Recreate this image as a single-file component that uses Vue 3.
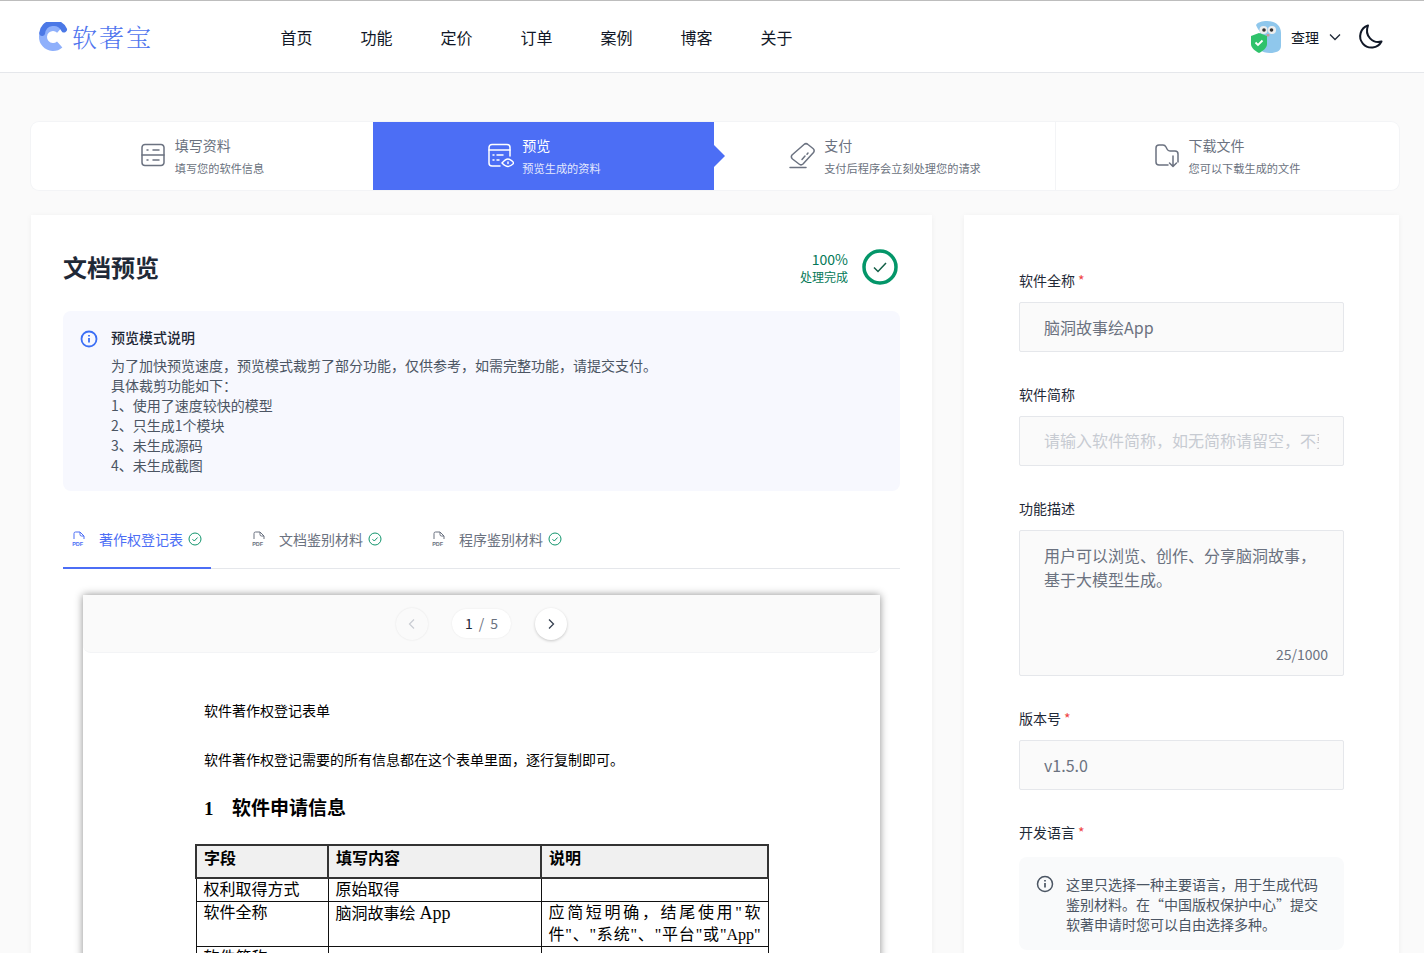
<template>
  <div class="page">
    <header class="topbar">
      <div class="brand">
        <svg class="brand-mark" viewBox="0 0 30 30" width="30" height="30">
          <circle cx="15" cy="15" r="10" fill="none" stroke="#8fb0fb" stroke-width="8" stroke-dasharray="46 17" transform="rotate(48 15 15)" />
          <path d="M26 7.500A11.500 11.500 0 0 0 4.200 11" fill="none" stroke="#4b78e6" stroke-width="6" stroke-linecap="round" />
        </svg>
        <span class="brand-name">软著宝</span>
      </div>
      <nav class="nav">
        <a v-for="item in navItems" :key="item" class="nav-item">{{ item }}</a>
      </nav>
      <div class="user">
        <svg class="avatar" viewBox="0 0 34 34" width="34" height="34">
          <path d="M6 5c2-3 6-4 11-4 8 0 14 4 14 12v13c0 5-5 7-11 7-4 0-8-1-10-3V12C9 10 7 8 6 5z" fill="#8fc7ec" />
          <circle cx="13.500" cy="10" r="4" fill="#eee" />
          <circle cx="22" cy="10" r="4" fill="#eee" />
          <circle cx="14" cy="10" r="1.800" fill="#333" />
          <circle cx="21.500" cy="10" r="1.800" fill="#333" />
          <rect x="16.500" y="14" width="3" height="2.500" rx="1" fill="#c99" />
          <path d="M9 13l8 3v8c0 4-4 7-8 9-4-2-8-5-8-9v-8z" fill="#2fc26b" />
          <path d="M5.500 22.500l2.500 2.500 4.500-4.500" fill="none" stroke="#fff" stroke-width="1.800" />
        </svg>
        <span class="user-name">查理</span>
        <svg class="chevron" viewBox="0 0 12 12" width="12" height="12">
          <path d="M1 3.500l5 5 5-5" fill="none" stroke="#1f2937" stroke-width="1.300" />
        </svg>
        <svg class="moon" viewBox="0 0 26 26" width="26" height="26">
          <path d="M11 1.500A11.300 11.300 0 1 0 24.500 17.500C16 20 7 12 11 1.500z" fill="none" stroke="#111827" stroke-width="2" stroke-linejoin="round" />
        </svg>
      </div>
    </header>

    <section class="steps">
      <div v-for="step in steps" :key="step.title" class="step" :class="{ active: step.active }">
        <svg class="step-icon" viewBox="0 0 28 28" width="28" height="28" fill="none" stroke="currentColor" stroke-width="1.500">
          <path v-for="d in step.icon" :key="d" :d="d" stroke-linecap="round" stroke-linejoin="round" />
        </svg>
        <div class="step-text">
          <div class="step-title">{{ step.title }}</div>
          <div class="step-desc">{{ step.desc }}</div>
        </div>
      </div>
    </section>

    <main class="content">
      <section class="card preview-card">
        <div class="preview-head">
          <h1 class="preview-title">文档预览</h1>
          <div class="progress">
            <div class="progress-text">
              <div class="progress-num">100%</div>
              <div class="progress-label">处理完成</div>
            </div>
            <svg viewBox="0 0 36 36" width="36" height="36">
              <circle cx="18" cy="18" r="16" fill="none" stroke="#049669" stroke-width="3.500" />
              <path d="M12 18.500l4 4 8-8.500" fill="none" stroke="#115e46" stroke-width="1.500" />
            </svg>
          </div>
        </div>

        <div class="notice">
          <svg class="notice-icon" viewBox="0 0 18 18" width="18" height="18">
            <circle cx="9" cy="9" r="7.500" fill="none" stroke="#3b6ff5" stroke-width="1.800" />
            <path d="M9 8v4.500M9 5v1.600" stroke="#3b6ff5" stroke-width="1.800" />
          </svg>
          <div>
            <div class="notice-title">预览模式说明</div>
            <div class="notice-body">
              <p v-for="line in noticeLines" :key="line">{{ line }}</p>
            </div>
          </div>
        </div>

        <div class="tabs">
          <div v-for="(tab, i) in tabs" :key="tab" class="tab" :class="{ current: i === 0 }">
            <svg class="pdf-icon" viewBox="0 0 14 16" width="14" height="16" fill="none" stroke="currentColor" stroke-width="1">
              <path d="M2 8V2.500Q2 1 3.500 1H8l4 4v3M8 1v2.500Q8 5 9.500 5H12" />
              <text x="0.200" y="14.500" class="pdf-label">PDF</text>
            </svg>
            <span class="tab-name">{{ tab }}</span>
            <svg viewBox="0 0 14 14" width="14" height="14" fill="none" stroke="#10946b" stroke-width="1">
              <circle cx="7" cy="7" r="6" />
              <path d="M4.500 7.200l1.800 1.800 3.300-3.500" />
            </svg>
          </div>
        </div>

        <div class="doc">
          <div class="doc-toolbar">
            <button class="page-btn disabled">
              <svg viewBox="0 0 12 12" width="12" height="12"><path d="M8 1.500L3.500 6 8 10.500" fill="none" stroke="#c9ccd2" stroke-width="1.200" /></svg>
            </button>
            <div class="page-count"><b>1</b><span>/</span><span>5</span></div>
            <button class="page-btn">
              <svg viewBox="0 0 12 12" width="12" height="12"><path d="M4 1.500L8.500 6 4 10.500" fill="none" stroke="#374151" stroke-width="1.300" /></svg>
            </button>
          </div>
          <div class="doc-body">
            <p class="doc-line first">软件著作权登记表单</p>
            <p class="doc-line">软件著作权登记需要的所有信息都在这个表单里面，逐行复制即可。</p>
            <h2 class="doc-heading"><span class="doc-num">1</span>软件申请信息</h2>
            <table class="doc-table">
              <colgroup>
                <col class="col-a" />
                <col class="col-b" />
                <col class="col-c" />
              </colgroup>
              <tbody>
                <tr class="head-row">
                  <th>字段</th>
                  <th>填写内容</th>
                  <th>说明</th>
                </tr>
                <tr class="row-short">
                  <td>权利取得方式</td>
                  <td>原始取得</td>
                  <td></td>
                </tr>
                <tr class="row-tall">
                  <td>软件全称</td>
                  <td>脑洞故事绘 <span class="latin">App</span></td>
                  <td class="explain">应简短明确，结尾使用"软件"、"系统"、"平台"或"App"</td>
                </tr>
                <tr class="row-tall">
                  <td>软件简称</td>
                  <td></td>
                  <td></td>
                </tr>
              </tbody>
            </table>
          </div>
        </div>
      </section>

      <aside class="card form-card">
        <div class="field">
          <label class="field-label">软件全称<i>*</i></label>
          <div class="input">脑洞故事绘App</div>
        </div>
        <div class="field">
          <label class="field-label">软件简称</label>
          <div class="input placeholder"><span>请输入软件简称，如无简称请留空，不要填写全称</span></div>
        </div>
        <div class="field">
          <label class="field-label">功能描述</label>
          <div class="textarea">
            <div>用户可以浏览、创作、分享脑洞故事，<br />基于大模型生成。</div>
            <div class="counter">25/1000</div>
          </div>
        </div>
        <div class="field">
          <label class="field-label">版本号<i>*</i></label>
          <div class="input">v1.5.0</div>
        </div>
        <div class="field">
          <label class="field-label">开发语言<i>*</i></label>
          <div class="hint">
            <svg class="hint-icon" viewBox="0 0 18 18" width="18" height="18">
              <circle cx="9" cy="9" r="7.500" fill="none" stroke="#4b5563" stroke-width="1.500" />
              <path d="M9 8v4.500M9 5v1.600" stroke="#4b5563" stroke-width="1.700" />
            </svg>
            <p>这里只选择一种主要语言，用于生成代码鉴别材料。在“中国版权保护中心”提交软著申请时您可以自由选择多种。</p>
          </div>
        </div>
      </aside>
    </main>
  </div>
</template>

<script setup>
const navItems = ['首页', '功能', '定价', '订单', '案例', '博客', '关于'];

const steps = [
  {
    title: '填写资料',
    desc: '填写您的软件信息',
    icon: [
      'M6 3.500h16a3 3 0 0 1 3 3v15a3 3 0 0 1-3 3H6a3 3 0 0 1-3-3v-15a3 3 0 0 1 3-3z',
      'M3 14h22',
      'M14 9h6M14 19h6',
      'M8 9h1M8 19h1',
    ],
  },
  {
    title: '预览',
    desc: '预览生成的资料',
    active: true,
    icon: [
      'M14 25H6a3 3 0 0 1-3-3V6.500a3 3 0 0 1 3-3h15a3 3 0 0 1 3 3V15',
      'M3 9h21',
      'M7 14h1M11 14h6M7 19h1M11 19h2',
      'M16 22q3.500-4 6-4t6 4q-3.500 3.500-6 3.500T16 22z',
      'M22 21v1.500',
    ],
  },
  {
    title: '支付',
    desc: '支付后程序会立刻处理您的请求',
    icon: [
      'M16 3.500a3 3 0 0 1 4 0l5 4a3 3 0 0 1 .5 4L15 23a3 3 0 0 1-4 0l-6.500-5a3 3 0 0 1-.5-4z',
      'M17 15l-3 3.500M20 12l-1 1.200',
      'M2 26.500h16',
    ],
  },
  {
    title: '下载文件',
    desc: '您可以下载生成的文件',
    icon: [
      'M15 24H6a3 3 0 0 1-3-3V7a3 3 0 0 1 3-3h4q2 0 3 2l1 2q1 2 3 2h5a3 3 0 0 1 3 3v8',
      'M20 15v10M16.500 22l3.500 3.500 3.500-3.500',
    ],
  },
];

const noticeLines = [
  '为了加快预览速度，预览模式裁剪了部分功能，仅供参考，如需完整功能，请提交支付。',
  '具体裁剪功能如下：',
  '1、使用了速度较快的模型',
  '2、只生成1个模块',
  '3、未生成源码',
  '4、未生成截图',
];

const tabs = ['著作权登记表', '文档鉴别材料', '程序鉴别材料'];
</script>

<style>
html,
body {
  margin: 0;
  background: #fafafa;
}
</style>

<style scoped>
.page {
  height: 953px;
  overflow: hidden;
  box-sizing: border-box;
  background: #fafafa;
  border-top: 1px solid #bdbdbd;
  font-family: 'Noto Sans CJK SC', 'Noto Sans', sans-serif;
  color: #111827;
}

.topbar {
  height: 72px;
  box-sizing: border-box;
  background: #fff;
  border-bottom: 1px solid #e5e7eb;
  display: flex;
  align-items: center;
  padding: 0 38px;
}

.brand {
  width: 242.500px;
  display: flex;
  align-items: center;
  gap: 4px;
}

.brand-mark {
  display: block;
}

.brand-name {
  font-family: 'Noto Serif CJK SC', 'Noto Sans CJK SC', sans-serif;
  font-size: 25px;
  font-weight: 300;
  line-height: 34px;
  letter-spacing: 2px;
  color: #4f74ee;
  margin-bottom: 2px;
}

.nav {
  flex: 1;
  display: flex;
  gap: 48px;
}

.nav-item {
  font-size: 16px;
  line-height: 24px;
  color: #111827;
}

.user {
  display: flex;
  align-items: center;
  margin-right: 3px;
}

.avatar {
  margin-right: 7px;
}

.user-name {
  font-size: 14px;
  margin-right: 10px;
}

.chevron {
  margin-right: 16px;
}

.steps {
  margin: 49px 25px 0 31px;
  height: 68px;
  background: #fff;
  box-shadow: 0 0 0 1px #f3f4f6;
  border-radius: 8px;
  display: grid;
  grid-template-columns: 342px 341px 341px 1fr;
}

.step {
  position: relative;
  box-sizing: border-box;
  padding-bottom: 2px;
  display: flex;
  align-items: center;
  justify-content: center;
  gap: 8px;
  color: #6b7280;
}

.step:first-child {
  padding-right: 1px;
}

.step:last-child {
  padding-right: 2px;
}

.step + .step {
  border-left: 1px solid #f3f4f6;
}

.step.active {
  background: #4c6ef5;
  color: #fff;
  border-left: none;
}

.step.active + .step {
  border-left: none;
}

.step.active::after {
  content: '';
  position: absolute;
  right: -11px;
  top: 23px;
  border-left: 11px solid #4c6ef5;
  border-top: 11px solid transparent;
  border-bottom: 11px solid transparent;
}

.step-title {
  font-size: 14px;
  line-height: 20px;
  margin-bottom: 5px;
}

.step-desc {
  font-size: 11.200px;
  line-height: 16px;
  color: #6b7280;
}

.active .step-title,
.active .step-desc {
  color: #fff;
}

.active .step-desc {
  opacity: 0.85;
}

.content {
  margin: 25px 25px 0 31px;
  display: flex;
  gap: 32px;
  align-items: flex-start;
}

.card {
  background: #fff;
  box-shadow: 0 1px 6px rgba(0, 0, 0, 0.05);
}

.preview-card {
  width: 901px;
  height: 760px;
  box-sizing: border-box;
  padding: 32px 32px 0;
}

.preview-head {
  display: flex;
  justify-content: space-between;
  align-items: center;
  height: 40px;
  padding-right: 2px;
}

.preview-title {
  margin: 0;
  font-size: 24px;
  font-weight: 700;
  line-height: 40px;
  color: #1f2937;
}

.progress {
  display: flex;
  align-items: center;
  gap: 14px;
}

.progress-text {
  padding-top: 2px;
  text-align: right;
  color: #047857;
}

.progress-num {
  font-size: 14px;
  line-height: 18px;
}

.progress-label {
  font-size: 12px;
  line-height: 18px;
}

.notice {
  margin-top: 24px;
  background: #f7f8fe;
  border-radius: 8px;
  padding: 14px 17px 16px;
  display: flex;
  gap: 13px;
}

.notice-icon {
  margin-top: 5px;
  flex-shrink: 0;
}

.notice-title {
  font-size: 14px;
  font-weight: 500;
  line-height: 24px;
  color: #1f2937;
}

.notice-body {
  margin-top: 6px;
  font-size: 14px;
  line-height: 20px;
  color: #4b5563;
}

.notice-body p {
  margin: 0;
}

.tabs {
  margin-top: 18px;
  height: 59px;
  display: flex;
  border-bottom: 1px solid #e5e7eb;
}

.tab {
  height: 60px;
  box-sizing: border-box;
  display: flex;
  align-items: center;
  padding: 0 9px;
  margin-right: 32px;
  color: #6b7280;
  font-size: 14px;
}

.tab.current {
  color: #4c6ef5;
  box-shadow: inset 0 -2px 0 #4c6ef5;
}

.pdf-icon {
  margin-right: 13px;
}

.pdf-label {
  font: 700 5.500px 'Liberation Sans', sans-serif;
  fill: currentColor;
  stroke: none;
}

.tab-name {
  margin-right: 5px;
}

.doc {
  margin: 26px 20px 0;
  height: 400px;
  background: #fff;
  box-shadow: 0 0 8px rgba(0, 0, 0, 0.45);
}

.doc-toolbar {
  height: 58px;
  box-sizing: border-box;
  background: #fafafa;
  border-bottom: 1px solid #f3f4f6;
  border-radius: 0 0 8px 8px;
  display: flex;
  align-items: center;
  justify-content: center;
  gap: 24px;
}

.page-btn {
  width: 32px;
  height: 32px;
  padding: 0;
  border: none;
  border-radius: 50%;
  background: #fff;
  box-shadow: 0 1px 3px rgba(0, 0, 0, 0.2);
  display: flex;
  align-items: center;
  justify-content: center;
}

.page-btn.disabled {
  background: #fafafa;
  box-shadow: 0 0 2px rgba(0, 0, 0, 0.1);
}

.page-count {
  width: 59px;
  height: 29px;
  box-sizing: border-box;
  border-radius: 15px;
  background: #fff;
  box-shadow: 0 0 2px rgba(0, 0, 0, 0.08);
  font-size: 14px;
  line-height: 29px;
  display: flex;
  justify-content: center;
  gap: 6px;
  color: #6b7280;
}

.page-count b {
  font-weight: 400;
  color: #1f2937;
}

.doc-body {
  padding: 49px 0 0 121px;
  font-family: 'Liberation Serif', 'Noto Sans CJK SC', serif;
  color: #000;
}

.doc-line {
  margin: 0;
  font-size: 14px;
  line-height: 20px;
}

.doc-line.first {
  margin-bottom: 29px;
}

.doc-heading {
  margin: 24px 0 21px;
  font-size: 19px;
  line-height: 28px;
  font-weight: 700;
  display: flex;
}

.doc-num {
  width: 28px;
}

.doc-table {
  width: 574px;
  margin-left: -9px;
  table-layout: fixed;
  border-collapse: collapse;
  font-size: 16px;
  line-height: 22px;
}

.col-a {
  width: 132px;
}

.col-b {
  width: 213px;
}

.doc-table th,
.doc-table td {
  border: 1px solid #111;
  padding: 0 7px;
  vertical-align: top;
  text-align: left;
}

.doc-table th {
  border: 2px solid #333;
  background: #f0f0f0;
  height: 33px;
  font-weight: 700;
  padding-top: 2px;
  box-sizing: border-box;
}

.row-short td {
  height: 22px;
}

.row-tall td {
  height: 44px;
}

.latin {
  font-size: 18px;
}

.doc-table td.explain {
  text-align: justify;
  text-align-last: justify;
}

.form-card {
  width: 435px;
  height: 760px;
  box-sizing: border-box;
  padding: 55px 55px 0;
}

.field {
  margin-bottom: 32px;
}

.field-label {
  display: block;
  font-size: 14px;
  line-height: 20px;
  font-weight: 400;
  color: #1f2937;
  margin-bottom: 12px;
}

.field-label i {
  font-style: normal;
  color: #ef4444;
  margin-left: 3px;
  font-size: 14px;
  line-height: 14px;
}

.input {
  height: 50px;
  box-sizing: border-box;
  background: #fafafa;
  border: 1px solid #e5e7eb;
  border-radius: 2px;
  padding: 0 24px;
  font-size: 16px;
  line-height: 48px;
  color: #6b7280;
  overflow: hidden;
  white-space: nowrap;
}

.input.placeholder {
  color: #c7cbd2;
  line-height: 46px;
}

.input.placeholder span {
  display: block;
  overflow: hidden;
}

.textarea {
  position: relative;
  height: 146px;
  box-sizing: border-box;
  background: #fafafa;
  border: 1px solid #e5e7eb;
  border-radius: 2px;
  padding: 12px 24px;
  font-size: 16px;
  line-height: 24px;
  color: #6b7280;
}

.counter {
  position: absolute;
  right: 15px;
  bottom: 9px;
  font-size: 14px;
  line-height: 24px;
}

.hint {
  margin-top: 15px;
  background: #f9fafb;
  border-radius: 8px;
  padding: 17px 17px 16px;
  display: flex;
  gap: 12px;
  color: #4b5563;
}

.hint-icon {
  flex-shrink: 0;
  margin-top: 1px;
}

.hint p {
  margin: 0;
  font-size: 14px;
  line-height: 20px;
}
</style>
